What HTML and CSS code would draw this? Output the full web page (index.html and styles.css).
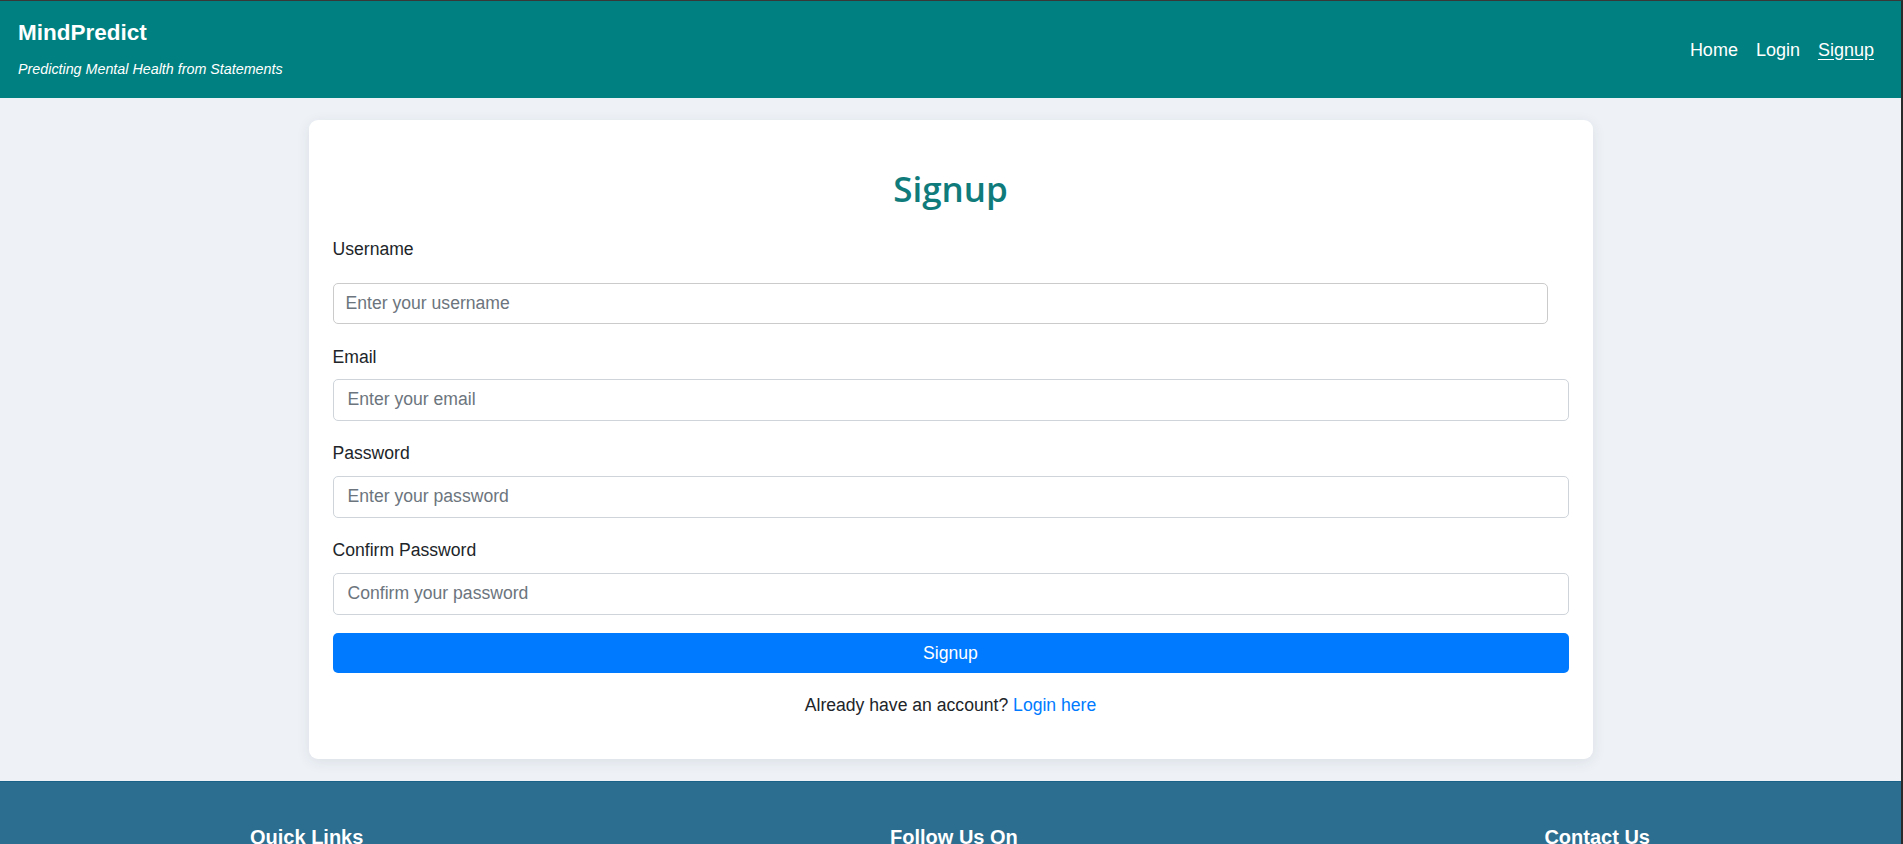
FILE: index.html
```html
<!DOCTYPE html>
<html lang="en">
<head>
<meta charset="utf-8">
<title>Signup - MindPredict</title>
<link rel="stylesheet" href="styles.css">
</head>
<body>
<div class="frame">
  <header class="site-header">
    <div class="brand">
      <h1 class="brand-title">MindPredict</h1>
      <p class="brand-tagline">Predicting Mental Health from Statements</p>
    </div>
    <nav class="nav">
      <a href="#" class="nav-link">Home</a>
      <a href="#" class="nav-link">Login</a>
      <a href="#" class="nav-link active">Signup</a>
    </nav>
  </header>

  <main class="main">
    <section class="card">
      <h2 class="card-title">Signup</h2>
      <form class="form">
        <div class="group group-first">
          <label class="label label-first" for="username">Username</label>
          <input class="input input-username" id="username" type="text" placeholder="Enter your username">
        </div>
        <div class="group">
          <label class="label" for="email">Email</label>
          <input class="input" id="email" type="email" placeholder="Enter your email">
        </div>
        <div class="group">
          <label class="label" for="password">Password</label>
          <input class="input" id="password" type="password" placeholder="Enter your password">
        </div>
        <div class="group">
          <label class="label" for="confirm">Confirm Password</label>
          <input class="input" id="confirm" type="password" placeholder="Confirm your password">
        </div>
        <button class="btn" type="button">Signup</button>
      </form>
      <p class="switch">Already have an account? <a href="#" class="switch-link">Login here</a></p>
    </section>
  </main>

  <footer class="site-footer">
    <div class="footer-col">
      <h3 class="footer-title">Quick Links</h3>
    </div>
    <div class="footer-col">
      <h3 class="footer-title">Follow Us On</h3>
    </div>
    <div class="footer-col">
      <h3 class="footer-title">Contact Us</h3>
    </div>
  </footer>
</div>
</body>
</html>
```

FILE: styles.css
```css
* {
  box-sizing: border-box;
}

html, body {
  margin: 0;
  padding: 0;
}

body {
  font-family: "Segoe UI", "Liberation Sans", Arial, sans-serif;
  color: #212529;
  background: #eef2f7;
}

.frame {
  border-top: 1px solid #383838;
  border-right: 2px solid #2a2a2a;
  min-height: 843px;
  background: #eef2f7;
}

/* Header */
.site-header {
  display: flex;
  align-items: center;
  justify-content: space-between;
  height: 97px;
  padding: 18px 27px 20px 18px;
  background: #008080;
  color: #fff;
}

.brand-title {
  margin: 0 0 14px;
  font-size: 22.5px;
  line-height: 27px;
  font-weight: 700;
}

.brand-tagline {
  margin: 0;
  font-size: 14.3px;
  line-height: 18px;
  font-style: italic;
}

.nav {
  display: flex;
  gap: 18px;
  padding-top: 2px;
}

.nav-link {
  color: #fff;
  text-decoration: none;
  font-size: 18px;
  line-height: 24px;
}

.nav-link.active {
  text-decoration: underline;
  text-underline-offset: 3px;
}

/* Main */
.main {
  padding: 22px 0 22px;
}

.card {
  width: 1284px;
  margin: 0 auto;
  padding: 24px 24px 24px;
  background: #fff;
  border-radius: 9px;
  box-shadow: 0 3px 14px rgba(30, 40, 60, 0.09);
}

.card-title {
  margin: 22.6px 0 26.6px;
  text-align: center;
  color: #107b7b;
  font-family: "Open Sans", "Liberation Sans", sans-serif;
  font-size: 35px;
  line-height: 43.2px;
  font-weight: 600;
}

.form {
  display: flex;
  flex-direction: column;
}

.group {
  display: flex;
  flex-direction: column;
  margin-bottom: 19.6px;
}

.group:last-of-type {
  margin-bottom: 18.7px;
}

.label {
  font-size: 17.6px;
  line-height: 26.4px;
  margin-bottom: 8.9px;
}

.label-first {
  margin-bottom: 20.2px;
}

.input {
  width: 100%;
  height: 42px;
  padding: 0 14px;
  font-family: inherit;
  font-size: 17.6px;
  color: #495057;
  background: #fff;
  border: 1px solid #ced4da;
  border-radius: 5px;
  outline: none;
}

.input::placeholder {
  color: #6c757d;
}

.input-username {
  width: calc(100% - 21px);
  height: 41px;
  padding: 0 12px;
  border-color: #cbcbcb;
}

.btn {
  width: 100%;
  height: 40px;
  border: none;
  border-radius: 5px;
  background: #007bff;
  color: #fff;
  font-family: inherit;
  font-size: 17.6px;
  cursor: pointer;
}

.switch {
  margin: 18.7px 0 16.6px;
  text-align: center;
  font-size: 17.6px;
  line-height: 26.4px;
}

.switch-link {
  color: #007bff;
  text-decoration: none;
}

/* Footer */
.site-footer {
  display: flex;
  justify-content: space-between;
  padding: 43px 251px 40px 250px;
  background: #2c6e8f;
  border-top: 1px solid #1b6288;
  color: #fff;
}

.footer-title {
  margin: 0;
  font-size: 20px;
  line-height: 24px;
  font-weight: 700;
}
```
